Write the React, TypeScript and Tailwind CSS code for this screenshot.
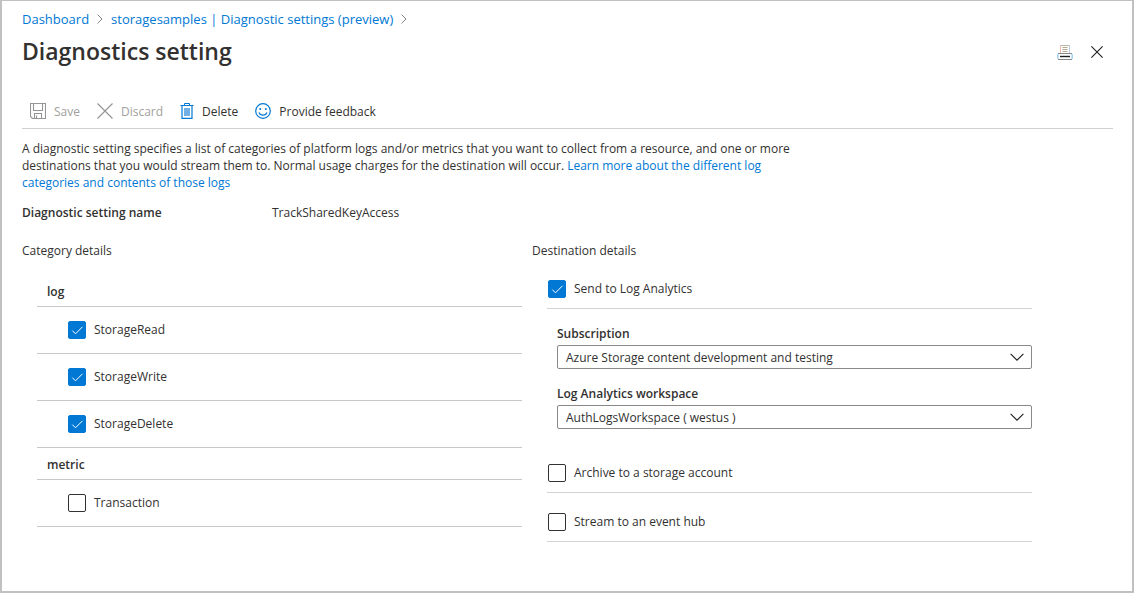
import React, { useState } from 'react';

interface CheckboxProps {
  id: string;
  label: string;
  checked: boolean;
  onChange: (id: string) => void;
}

interface DropdownProps {
  id: string;
  label: string;
  options: string[];
}

const logCategories = ['StorageRead', 'StorageWrite', 'StorageDelete'];
const metricCategories = ['Transaction'];

const Checkbox: React.FC<CheckboxProps> = ({
  id,
  label,
  checked,
  onChange,
}) => {
  return (
    <div className="flex items-center gap-2">
      <span className="grid size-[18px] shrink-0">
        <input
          id={id}
          type="checkbox"
          checked={checked}
          onChange={() => onChange(id)}
          className="col-start-1 row-start-1 size-[18px] appearance-none rounded-[2px] border border-[#323130] bg-white checked:border-[#0078d4] checked:bg-[#0078d4]"
        />
        {checked && (
          <svg
            viewBox="0 0 18 18"
            className="pointer-events-none col-start-1 row-start-1 size-[18px]"
            fill="none"
            stroke="#fff"
            strokeWidth="1"
          >
            <path d="M4.3 9.6 7.5 12.8 14.5 5.8" />
          </svg>
        )}
      </span>
      <label htmlFor={id} className="pb-[2px]">
        {label}
      </label>
    </div>
  );
};

const Dropdown: React.FC<DropdownProps> = ({ id, label, options }) => {
  return (
    <div className="pl-[10px]">
      <label htmlFor={id} className="block font-semibold">
        {label}
      </label>
      <div className="mt-[3px] grid">
        <select
          id={id}
          className="col-start-1 row-start-1 h-6 w-full appearance-none rounded-[2px] border border-[#8a8886] bg-white pr-8 pl-2"
        >
          {options.map((option) => (
            <option key={option}>{option}</option>
          ))}
        </select>
        <svg
          viewBox="0 0 14 8"
          className="pointer-events-none col-start-1 row-start-1 mr-2 h-2 w-[14px] self-center justify-self-end"
          fill="none"
          stroke="#201f1e"
          strokeWidth="1.1"
        >
          <path d="M.6.8 7 7.2 13.4.8" />
        </svg>
      </div>
    </div>
  );
};

const BreadcrumbArrow = () => (
  <svg
    viewBox="0 0 6 10"
    className="h-[10px] w-[6px]"
    fill="none"
    stroke="#8a8886"
    strokeWidth="1"
  >
    <path d="M.5.5 5 5 .5 9.5" />
  </svg>
);

const SaveIcon = () => (
  <svg
    viewBox="0 0 16 16"
    className="size-4"
    fill="none"
    stroke="#979593"
    strokeWidth="1.1"
  >
    <path d="M.5.5H15.5V15.5H2.5L.5 13.5Z" />
    <path d="M3.5.5V7.5H12.5V.5" />
    <path d="M4.5 15.5V10.5H11.5V15.5M6.5 12.5V15.5" />
  </svg>
);

const DiscardIcon = () => (
  <svg
    viewBox="0 0 16 16"
    className="size-4"
    fill="none"
    stroke="#979593"
    strokeWidth="1.2"
  >
    <path d="M.5.5 15.5 15.5M15.5.5.5 15.5" />
  </svg>
);

const DeleteIcon = () => (
  <svg viewBox="0 0 14 16" className="h-4 w-[14px]" fill="none">
    <path d="M4.5 2V.5H9.5V2" stroke="#0078d4" />
    <path d="M.5 2.5H13.5" stroke="#0078d4" />
    <path d="M2 2.5V15.4H12V2.5" stroke="#0078d4" strokeWidth="1.2" />
    <path d="M4 5H10V13H4Z" fill="#71afe5" />
  </svg>
);

const SmileIcon = () => (
  <svg
    viewBox="0 0 16 16"
    className="size-4"
    fill="none"
    stroke="#0078d4"
    strokeWidth="1.2"
  >
    <circle cx="8" cy="8" r="7.3" />
    <path d="M4 9.5C5.2 13 10.8 13 12 9.5" />
    <circle cx="5.2" cy="5.9" r="1" fill="#0078d4" stroke="none" />
    <circle cx="10.8" cy="5.9" r="1" fill="#0078d4" stroke="none" />
  </svg>
);

const PrintIcon = () => (
  <svg viewBox="0 0 16 16" className="size-4" fill="none">
    <path d="M3.5 9V1.5" stroke="#f0b8a8" />
    <path d="M12.5 9V1.5" stroke="#b8c8e8" />
    <path d="M3.5 1.5H12.5" stroke="#b8b4b0" />
    <path d="M5.5 3.5H10.5M5.5 5.5H10.5M5.5 7.5H10.5" stroke="#b8a890" />
    <path d="M.5 15V10M15.5 10V15" stroke="#a6d8f4" />
    <path d="M1.5 15V10M14.5 10V15" stroke="#c8e4f4" />
    <path d="M1 9.5H15M1 15.5H15" stroke="#8a8886" />
    <path d="M3 12.5H13" stroke="#201f1e" strokeWidth="1.4" />
  </svg>
);

const CloseIcon = () => (
  <svg
    viewBox="0 0 12 12"
    className="size-3"
    fill="none"
    stroke="#201f1e"
    strokeWidth="1.1"
  >
    <path d="M.4.4 11.6 11.6M11.6.4.4 11.6" />
  </svg>
);

const App: React.FC = () => {
  const [selected, setSelected] = useState<string[]>([
    ...logCategories,
    'logAnalytics',
  ]);

  const toggle = (id: string) => {
    setSelected((prev) =>
      prev.includes(id) ? prev.filter((item) => item !== id) : [...prev, id],
    );
  };

  const renderCategory = (name: string) => (
    <li
      key={name}
      className="flex h-[47px] items-center border-b border-[#c8c8c8] pl-[31px]"
    >
      <Checkbox
        id={name}
        label={name}
        checked={selected.includes(name)}
        onChange={toggle}
      />
    </li>
  );

  return (
    <div className="min-h-screen border-2 border-t border-[#c0c0c0] bg-white pt-[9px] pr-[19px] pb-5 pl-5 font-['Open_Sans','Noto_Sans',sans-serif] text-[12px] leading-[17px] text-[#323130]">
      <nav className="flex h-[18px] items-center gap-2 text-[13px] text-[#0078d4]">
        <a href="#dashboard">Dashboard</a>
        <BreadcrumbArrow />
        <a href="#settings">storagesamples | Diagnostic settings (preview)</a>
        <BreadcrumbArrow />
      </nav>

      <header className="mt-2 flex h-8 items-center justify-between">
        <h1 className="pb-[2px] text-[23px] leading-8 font-semibold">
          Diagnostics setting
        </h1>
        <div className="flex items-center gap-[18px] pr-[10px]">
          <button type="button" aria-label="Print">
            <PrintIcon />
          </button>
          <button type="button" aria-label="Close">
            <CloseIcon />
          </button>
        </div>
      </header>

      <div className="mt-[26px] flex h-[35px] items-center gap-[17px] border-b border-[#d2d0ce] pl-2">
        <button
          type="button"
          disabled
          className="flex items-center gap-2 text-[#a19f9d]"
        >
          <SaveIcon />
          Save
        </button>
        <button
          type="button"
          disabled
          className="flex items-center gap-2 text-[#a19f9d]"
        >
          <DiscardIcon />
          Discard
        </button>
        <button type="button" className="flex items-center gap-2">
          <DeleteIcon />
          Delete
        </button>
        <button type="button" className="flex items-center gap-2">
          <SmileIcon />
          Provide feedback
        </button>
      </div>

      <p className="mt-[11px] max-w-[795px]">
        A diagnostic setting specifies a list of categories of platform logs
        and/or metrics that you want to collect from a resource, and one or more
        destinations that you would stream them to. Normal usage charges for the
        destination will occur.{' '}
        <a href="#learn-more" className="text-[#0078d4]">
          Learn more about the different log categories and contents of those
          logs
        </a>
      </p>

      <dl className="mt-[13px] flex">
        <dt className="w-[250px] font-semibold">Diagnostic setting name</dt>
        <dd>TrackSharedKeyAccess</dd>
      </dl>

      <div className="mt-[21px] grid max-w-[1010px] grid-cols-2 gap-[10px]">
        <section>
          <h2>Category details</h2>
          <div className="mt-4 pl-[15px]">
            <h3 className="flex h-8 items-center border-b border-[#c8c8c8] pt-[2px] pl-[10px] font-semibold">
              log
            </h3>
            <ul>{logCategories.map(renderCategory)}</ul>
            <h3 className="flex h-8 items-center border-b border-[#c8c8c8] pt-[2px] pl-[10px] font-semibold">
              metric
            </h3>
            <ul>{metricCategories.map(renderCategory)}</ul>
          </div>
        </section>

        <section>
          <h2>Destination details</h2>
          <div className="mt-[11px] pl-[15px]">
            <div className="flex h-[39px] items-center border-b border-[#d2d2d2] pl-px">
              <Checkbox
                id="logAnalytics"
                label="Send to Log Analytics"
                checked={selected.includes('logAnalytics')}
                onChange={toggle}
              />
            </div>
            <div className="mt-4 flex flex-col gap-4">
              <Dropdown
                id="subscription"
                label="Subscription"
                options={['Azure Storage content development and testing']}
              />
              <Dropdown
                id="workspace"
                label="Log Analytics workspace"
                options={['AuthLogsWorkspace ( westus )']}
              />
            </div>
            <div className="mt-[25px] flex h-[39px] items-center border-b border-[#d2d2d2] pl-px">
              <Checkbox
                id="storageAccount"
                label="Archive to a storage account"
                checked={selected.includes('storageAccount')}
                onChange={toggle}
              />
            </div>
            <div className="mt-[10px] flex h-[39px] items-center border-b border-[#d2d2d2] pl-px">
              <Checkbox
                id="eventHub"
                label="Stream to an event hub"
                checked={selected.includes('eventHub')}
                onChange={toggle}
              />
            </div>
          </div>
        </section>
      </div>
    </div>
  );
};

export default App;
